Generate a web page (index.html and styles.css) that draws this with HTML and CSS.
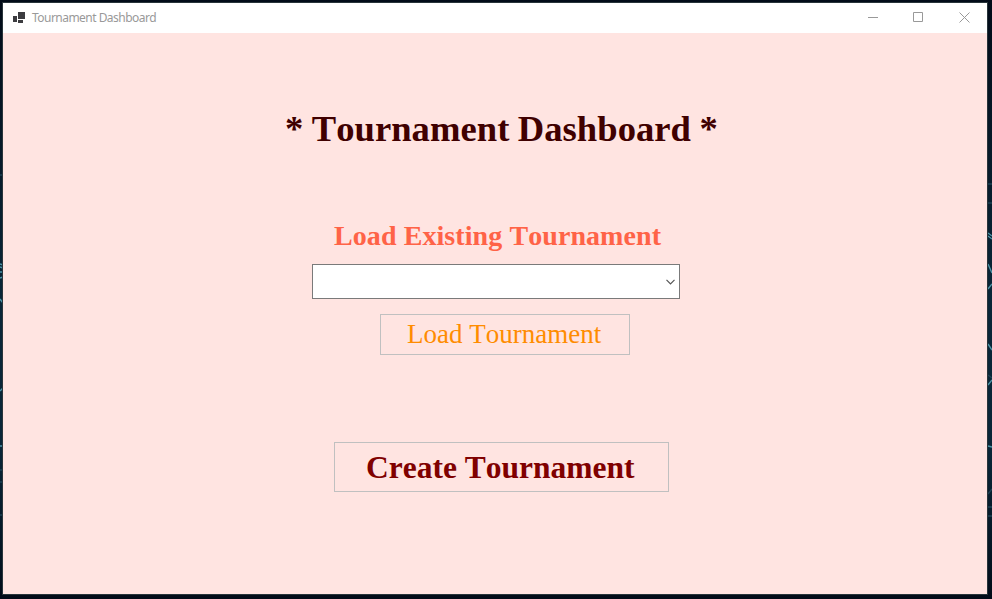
FILE: index.html
```html
<!DOCTYPE html>
<html lang="en">
<head>
<meta charset="utf-8">
<title>Tournament Dashboard</title>
<link rel="stylesheet" href="styles.css">
</head>
<body>
<svg class="wallpaper" width="992" height="599" aria-hidden="true">
  <path d="M0 264l3 1M0 267l3 1M0 272h3M0 278l3-1M0 299l3 4M0 391l3-3M0 446h3"/>
  <path d="M988 233l4 3M988 236l4 3M988 264l4 9M988 289l4-5M988 344l4 6M988 385l4-5M988 446l4 1"/>
  <path class="faint" d="M0 175h3M0 470h3M0 482h3M0 515h3M988 184h4M988 203h4M988 375l4 3M988 494l4-5M988 507h4M988 516h4"/>
</svg>
<div class="window">
  <header class="titlebar">
    <svg class="app-icon" width="13" height="11" shape-rendering="crispEdges"><path fill="#3c3c40" d="M5 0h7v7H5zM0 4h4v6H0zM5 8h5v3H5z"/></svg>
    <span class="caption">Tournament Dashboard</span>
    <div class="controls">
      <svg width="11" height="11"><path d="M0 5.5h10"/></svg>
      <svg width="11" height="11"><path d="M.5 .5h9v9h-9z"/></svg>
      <svg class="close" width="11" height="11"><path d="M.5 .5l10 10M10.500 .5l-10 10"/></svg>
    </div>
  </header>
  <main class="form">
    <h1 class="title">* Tournament Dashboard *</h1>
    <h2 class="subtitle">Load Existing Tournament</h2>
    <div class="combo" role="combobox" aria-label="Tournament">
      <svg width="9" height="6"><path d="M.5 .8l4 4 4-4"/></svg>
    </div>
    <button class="load">Load Tournament</button>
    <button class="create">Create Tournament</button>
  </main>
</div>
</body>
</html>
```

FILE: styles.css
```css
* { box-sizing: border-box; }
body {
  margin: 0;
  width: 992px;
  height: 599px;
  overflow: hidden;
  padding: 2px 4px 4px 2px;
  background: linear-gradient(#020b18, #051726 20%, #092638 50%, #092638 75%, #031220 95%, #020b18);
}
.wallpaper { position: absolute; left: 0; top: 0; fill: none; stroke: #4b93a6; stroke-width: 1.4; }
.wallpaper .faint { stroke: #1d4154; }
.window {
  position: relative;
  width: 986px;
  height: 593px;
  border: 1px solid #28343a;
  background: #ffe4e1;
}
.titlebar {
  display: flex;
  align-items: center;
  height: 30px;
  padding: 0 17px 0 10px;
  background: #fff;
}
.app-icon { margin-top: -1px; }
.caption {
  margin-left: 6px;
  font: 12px/16px "Noto Sans", sans-serif;
  letter-spacing: -0.53px;
  color: #999;
  white-space: nowrap;
}
.controls { display: flex; gap: 34px; margin-left: auto; margin-top: -1px; }
.controls svg { fill: none; stroke: #999; }
.controls .close { margin-left: 1px; }
.form {
  display: flex;
  flex-direction: column;
  align-items: flex-start;
  font-family: "Liberation Serif", serif;
  font-kerning: none;
  white-space: nowrap;
}
.title {
  margin: 75px 0 0 282px;
  font-size: 36.600px;
  line-height: 42px;
  letter-spacing: 0.05px;
  word-spacing: -0.8px;
  color: #400000;
}
.subtitle {
  margin: 69px 0 0 331px;
  font-size: 28px;
  line-height: 34px;
  letter-spacing: 0.08px;
  color: #ff6347;
}
.combo {
  display: flex;
  align-items: center;
  justify-content: flex-end;
  width: 368px;
  height: 35px;
  margin: 11px 0 0 309px;
  padding-right: 4px;
  border: 1px solid #7a7a7a;
  background: #fff;
}
.combo svg { fill: none; stroke: #555; stroke-width: 1.2; }
button {
  padding: 0;
  border: 1px solid #c0c0c0;
  background: transparent;
  font-family: inherit;
  font-kerning: none;
  text-align: left;
}
.load {
  width: 250px;
  height: 41px;
  margin: 15px 0 0 377px;
  padding-left: 26px;
  font-size: 27px;
  color: #ff8c00;
}
.create {
  width: 335px;
  height: 50px;
  margin: 87px 0 0 331px;
  padding: 2px 0 0 31px;
  font-size: 31.500px;
  font-weight: bold;
  color: #800000;
}
```
